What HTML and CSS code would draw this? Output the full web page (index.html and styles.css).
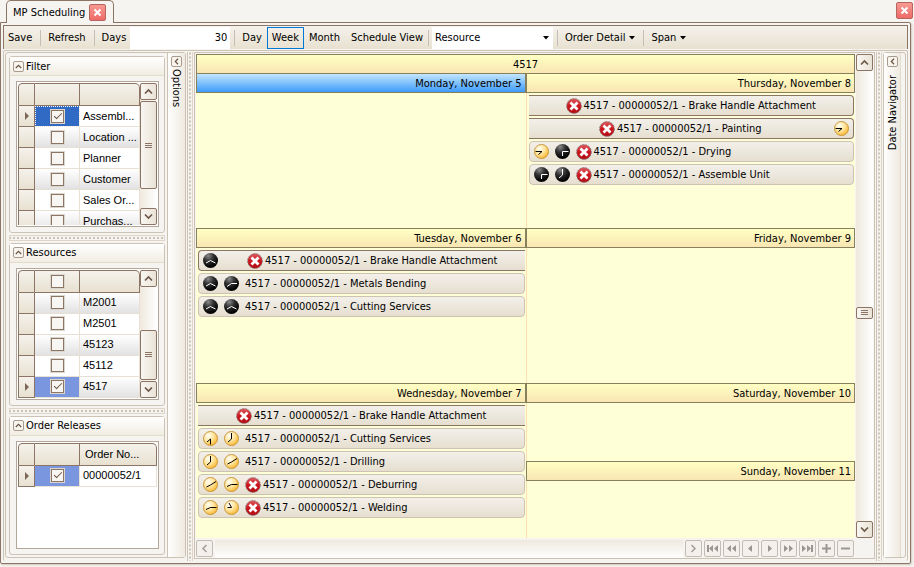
FILE: index.html
```html
<!DOCTYPE html>
<html lang="en">
<head>
    <meta charset="UTF-8">
    <meta name="viewport" content="width=device-width, initial-scale=1.0">
    <title>MP Scheduling</title>
    <link rel="stylesheet" href="styles.css">
</head>
<body>
    <!-- shared icons -->
    <svg class="defs" width="0" height="0" aria-hidden="true">
        <defs>
            <radialGradient id="day-fill" cx="0.35" cy="0.3" r="0.75">
                <stop offset="0" stop-color="#fffdf5"/>
                <stop offset="0.5" stop-color="#ffe6a0"/>
                <stop offset="1" stop-color="#fbb52c"/>
            </radialGradient>
            <radialGradient id="night-fill" cx="0.35" cy="0.2" r="0.7">
                <stop offset="0" stop-color="#8a8a8a"/>
                <stop offset="0.5" stop-color="#303030"/>
                <stop offset="1" stop-color="#050505"/>
            </radialGradient>
            <linearGradient id="error-fill" x1="0" y1="0" x2="0" y2="1">
                <stop offset="0" stop-color="#dc5a60"/>
                <stop offset="0.5" stop-color="#cc161e"/>
                <stop offset="1" stop-color="#b00e14"/>
            </linearGradient>
            <symbol id="day" viewBox="0 0 15 15"><circle cx="7.5" cy="7.5" r="7" fill="url(#day-fill)" stroke="#c9963c"/></symbol>
            <symbol id="night" viewBox="0 0 15 15"><circle cx="7.5" cy="7.5" r="7.5" fill="url(#night-fill)"/></symbol>
            <symbol id="error" viewBox="0 0 16 16">
                <circle cx="8" cy="8" r="7.4" fill="url(#error-fill)" stroke="#8d8484" stroke-dasharray="2 1"/>
                <path d="M4.500 4.500L11.500 11.500M11.500 4.500L4.500 11.500" stroke="#fff" stroke-width="2.8"/>
            </symbol>
            <symbol id="up" viewBox="0 0 9 9"><path d="M1 6.5L4.5 3L8 6.5" fill="none" stroke="currentColor" stroke-width="1.6"/></symbol>
            <symbol id="down" viewBox="0 0 9 9"><path d="M1 2.5L4.5 6L8 2.5" fill="none" stroke="currentColor" stroke-width="1.6"/></symbol>
            <symbol id="left" viewBox="0 0 9 9"><path d="M6.5 1L3 4.5L6.5 8" fill="none" stroke="currentColor" stroke-width="1.6"/></symbol>
            <symbol id="right" viewBox="0 0 9 9"><path d="M2.5 1L6 4.5L2.5 8" fill="none" stroke="currentColor" stroke-width="1.6"/></symbol>
            <symbol id="close" viewBox="0 0 9 9"><path d="M1.5 1.5L7.5 7.5M7.5 1.5L1.5 7.5" stroke="#fff" stroke-width="2"/></symbol>
            <symbol id="caret" viewBox="0 0 6 4"><path d="M0 0H6L3 3.5Z" fill="#000"/></symbol>
        </defs>
    </svg>

    <header class="tabs">
        <div class="tab">
            <span>MP Scheduling</span>
            <button class="close" aria-label="Close tab"><svg width="9" height="9"><use href="#close"/></svg></button>
        </div>
        <button class="close close-window" aria-label="Close window"><svg width="9" height="9"><use href="#close"/></svg></button>
    </header>

    <main class="frame">
        <div class="toolbar">
            <button class="tool">Save</button>
            <span class="sep"></span>
            <button class="tool">Refresh</button>
            <span class="sep"></span>
            <label class="tool-label" for="days">Days</label>
            <input class="days" id="days" type="text" value="30">
            <span class="sep"></span>
            <button class="tool">Day</button>
            <button class="tool active">Week</button>
            <button class="tool">Month</button>
            <button class="tool wide">Schedule View</button>
            <span class="sep"></span>
            <span class="combo">
                <select aria-label="Group by"><option>Resource</option></select>
                <svg width="6" height="4"><use href="#caret"/></svg>
            </span>
            <span class="sep"></span>
            <button class="tool">Order Detail <svg width="6" height="4"><use href="#caret"/></svg></button>
            <span class="sep"></span>
            <button class="tool">Span <svg width="6" height="4"><use href="#caret"/></svg></button>
        </div>

        <div class="content">
            <aside class="dock">
                <div class="groups">
                    <section class="group group-filter">
                        <h2><button class="toggle" aria-label="Collapse filter"><svg width="7" height="7"><use href="#up"/></svg></button>Filter</h2>
                        <div class="list">
                            <div class="rows">
                                <table>
                                    <thead><tr><th class="mark"></th><th class="pick"></th><th></th></tr></thead>
                                    <tbody>
                                        <tr class="focused"><th class="mark"><i class="pointer"></i></th><td class="pick"><input type="checkbox" aria-label="Assembly" checked></td><td>Assembl...</td></tr>
                                        <tr><th class="mark"></th><td class="pick"><input type="checkbox" aria-label="Location"></td><td>Location ...</td></tr>
                                        <tr><th class="mark"></th><td class="pick"><input type="checkbox" aria-label="Planner"></td><td>Planner</td></tr>
                                        <tr><th class="mark"></th><td class="pick"><input type="checkbox" aria-label="Customer"></td><td>Customer</td></tr>
                                        <tr><th class="mark"></th><td class="pick"><input type="checkbox" aria-label="Sales Order"></td><td>Sales Or...</td></tr>
                                        <tr><th class="mark"></th><td class="pick"><input type="checkbox" aria-label="Purchase"></td><td>Purchas...</td></tr>
                                    </tbody>
                                </table>
                            </div>
                            <div class="scroll">
                                <button class="sbtn" aria-label="Scroll up"><svg width="9" height="9"><use href="#up"/></svg></button>
                                <div class="thumb thumb-filter"><i class="grip"></i></div>
                                <div class="space"></div>
                                <button class="sbtn" aria-label="Scroll down"><svg width="9" height="9"><use href="#down"/></svg></button>
                            </div>
                        </div>
                    </section>
                    <div class="split-h"></div>
                    <section class="group group-resources">
                        <h2><button class="toggle" aria-label="Collapse resources"><svg width="7" height="7"><use href="#up"/></svg></button>Resources</h2>
                        <div class="list">
                            <div class="rows">
                                <table class="odd">
                                    <thead><tr><th class="mark"></th><th class="pick"><input type="checkbox" aria-label="All resources"></th><th></th></tr></thead>
                                    <tbody>
                                        <tr><th class="mark"></th><td class="pick"><input type="checkbox" aria-label="M2001"></td><td>M2001</td></tr>
                                        <tr><th class="mark"></th><td class="pick"><input type="checkbox" aria-label="M2501"></td><td>M2501</td></tr>
                                        <tr><th class="mark"></th><td class="pick"><input type="checkbox" aria-label="45123"></td><td>45123</td></tr>
                                        <tr><th class="mark"></th><td class="pick"><input type="checkbox" aria-label="45112"></td><td>45112</td></tr>
                                        <tr class="current"><th class="mark"><i class="pointer"></i></th><td class="pick"><input type="checkbox" aria-label="4517" checked></td><td>4517</td></tr>
                                    </tbody>
                                </table>
                            </div>
                            <div class="scroll">
                                <button class="sbtn" aria-label="Scroll up"><svg width="9" height="9"><use href="#up"/></svg></button>
                                <div class="space"></div>
                                <div class="thumb thumb-resources"><i class="grip"></i></div>
                                <button class="sbtn" aria-label="Scroll down"><svg width="9" height="9"><use href="#down"/></svg></button>
                            </div>
                        </div>
                    </section>
                    <div class="split-h"></div>
                    <section class="group group-orders">
                        <h2><button class="toggle" aria-label="Collapse order releases"><svg width="7" height="7"><use href="#up"/></svg></button>Order Releases</h2>
                        <div class="list">
                            <div class="rows">
                                <table>
                                    <thead><tr><th class="mark"></th><th class="pick"></th><th>Order No...</th></tr></thead>
                                    <tbody>
                                        <tr class="current"><th class="mark"><i class="pointer"></i></th><td class="pick"><input type="checkbox" aria-label="00000052/1" checked></td><td>00000052/1</td></tr>
                                    </tbody>
                                </table>
                            </div>
                        </div>
                    </section>
                </div>
                <div class="side">
                    <button class="toggle" aria-label="Collapse options"><svg width="7" height="7"><use href="#left"/></svg></button>
                    <span class="side-text">Options</span>
                </div>
            </aside>

            <div class="split-v"></div>

            <section class="scheduler">
                <div class="board">
                    <div class="calendar">
                        <div class="resource">4517</div>
                        <div class="week">
                            <div class="days-col">
                                <div class="cell">
                                    <div class="date today">Monday, November 5</div>
                                </div>
                                <div class="cell">
                                    <div class="date">Tuesday, November 6</div>
                                    <div class="event span-start"><svg class="clock light"><use href="#night"/><path d="M3 10L7.5 7.5L12.5 10"/></svg><div class="mid"><svg class="err"><use href="#error"/></svg>4517 - 00000052/1 - Brake Handle Attachment</div></div>
                                    <div class="event"><svg class="clock light"><use href="#night"/><path d="M3 10L7.5 7.5L12.5 10"/></svg><svg class="clock light"><use href="#night"/><path d="M3 10.5L7.5 7.5H13"/></svg><span>4517 - 00000052/1 - Metals Bending</span></div>
                                    <div class="event"><svg class="clock light"><use href="#night"/><path d="M3 10L7.5 7.5L12.5 10"/></svg><svg class="clock light"><use href="#night"/><path d="M3 10L7.5 7.5L12.5 10"/></svg><span>4517 - 00000052/1 - Cutting Services</span></div>
                                </div>
                                <div class="cell">
                                    <div class="date">Wednesday, November 7</div>
                                    <div class="event span-mid"><div class="mid"><svg class="err"><use href="#error"/></svg>4517 - 00000052/1 - Brake Handle Attachment</div></div>
                                    <div class="event"><svg class="clock"><use href="#day"/><path d="M4 11L7.5 8V13.5"/></svg><svg class="clock"><use href="#day"/><path d="M7.5 2V8L4 11"/></svg><span>4517 - 00000052/1 - Cutting Services</span></div>
                                    <div class="event"><svg class="clock"><use href="#day"/><path d="M7.5 2V8L4 11"/></svg><svg class="clock"><use href="#day"/><path d="M3.5 10L7.5 8L13 4.5"/></svg><span>4517 - 00000052/1 - Drilling</span></div>
                                    <div class="event"><svg class="clock"><use href="#day"/><path d="M3.5 10L7.5 8L13 4.5"/></svg><svg class="clock"><use href="#day"/><path d="M3 9.5L7.5 7.5H13.5"/></svg><svg class="err"><use href="#error"/></svg><span>4517 - 00000052/1 - Deburring</span></div>
                                    <div class="event"><svg class="clock"><use href="#day"/><path d="M3 9.5L7.5 7.5H13.5"/></svg><svg class="clock"><use href="#day"/><path d="M5 3L7.5 7.5H3.5"/></svg><svg class="err"><use href="#error"/></svg><span>4517 - 00000052/1 - Welding</span></div>
                                </div>
                            </div>
                            <div class="days-col">
                                <div class="cell">
                                    <div class="date">Thursday, November 8</div>
                                    <div class="event span-end"><div class="mid"><svg class="err"><use href="#error"/></svg>4517 - 00000052/1 - Brake Handle Attachment</div></div>
                                    <div class="event span-end"><div class="mid"><svg class="err"><use href="#error"/></svg>4517 - 00000052/1 - Painting</div><svg class="clock"><use href="#day"/><path d="M1.5 7.5H8L4.5 10.5"/></svg></div>
                                    <div class="event"><svg class="clock"><use href="#day"/><path d="M1.5 7.5H8L4.5 10.5"/></svg><svg class="clock light"><use href="#night"/><path d="M13.5 7.5H7.5V12"/></svg><svg class="err"><use href="#error"/></svg><span>4517 - 00000052/1 - Drying</span></div>
                                    <div class="event"><svg class="clock light"><use href="#night"/><path d="M13.5 7.5H7.5V12"/></svg><svg class="clock light"><use href="#night"/><path d="M7.5 2V8L4 11"/></svg><svg class="err"><use href="#error"/></svg><span>4517 - 00000052/1 - Assemble Unit</span></div>
                                </div>
                                <div class="cell">
                                    <div class="date">Friday, November 9</div>
                                </div>
                                <div class="cell weekend">
                                    <div class="half">
                                        <div class="date">Saturday, November 10</div>
                                    </div>
                                    <div class="half">
                                        <div class="date">Sunday, November 11</div>
                                    </div>
                                </div>
                            </div>
                        </div>
                    </div>
                    <div class="scroll scroll-main">
                        <button class="sbtn" aria-label="Previous weeks"><svg width="9" height="9"><use href="#up"/></svg></button>
                        <div class="space space-before"></div>
                        <div class="thumb thumb-main"><i class="grip"></i></div>
                        <div class="space space-after"></div>
                        <button class="sbtn" aria-label="Next weeks"><svg width="9" height="9"><use href="#down"/></svg></button>
                    </div>
                </div>
                <div class="navigator">
                    <button class="nbtn" aria-label="Scroll left"><svg width="9" height="9"><use href="#left"/></svg></button>
                    <div class="track"></div>
                    <button class="nbtn" aria-label="Scroll right"><svg width="9" height="9"><use href="#right"/></svg></button>
                    <button class="nbtn" aria-label="First"><svg width="11" height="9"><path d="M0 1H2V8H0ZM6 1V8L2 4.500ZM11 1V8L7 4.500Z"/></svg></button>
                    <button class="nbtn" aria-label="Previous page"><svg width="11" height="9"><path d="M5 1V8L1 4.500ZM10 1V8L6 4.500Z"/></svg></button>
                    <button class="nbtn" aria-label="Previous"><svg width="11" height="9"><path d="M7 1V8L3 4.500Z"/></svg></button>
                    <button class="nbtn" aria-label="Next"><svg width="11" height="9"><path d="M4 1V8L8 4.500Z"/></svg></button>
                    <button class="nbtn" aria-label="Next page"><svg width="11" height="9"><path d="M1 1V8L5 4.500ZM6 1V8L10 4.500Z"/></svg></button>
                    <button class="nbtn" aria-label="Last"><svg width="11" height="9"><path d="M0 1V8L4 4.500ZM5 1V8L9 4.500ZM9 1H11V8H9Z"/></svg></button>
                    <button class="nbtn" aria-label="Add resource"><svg width="11" height="9"><path d="M1 3.500H10V5.500H1ZM4.500 0H6.500V9H4.500Z"/></svg></button>
                    <button class="nbtn" aria-label="Remove resource"><svg width="11" height="9"><path d="M1 3.500H10V5.500H1Z"/></svg></button>
                </div>
            </section>

            <div class="split-v"></div>

            <aside class="date-nav">
                <div class="side">
                    <button class="toggle" aria-label="Expand date navigator"><svg width="7" height="7"><use href="#left"/></svg></button>
                    <span class="side-text flipped">Date Navigator</span>
                </div>
            </aside>
        </div>
    </main>
</body>
</html>
```
FILE: styles.css
```css
:root {
    --brown: #8c7565;
    --tan: #cdc3b5;
    --panel: #f6f4f0;
    --face: linear-gradient(#f5f2ec, #e8e1d1);
    --header: linear-gradient(#ffffc4, #f9e6b2);
    --olive: #87805c;
}

* {
    box-sizing: border-box;
}

body {
    margin: 0;
    height: 100vh;
    display: flex;
    flex-direction: column;
    background-color: var(--panel);
    color: #000;
    font-family: "DejaVu Sans Condensed", Tahoma, sans-serif;
    font-size: 11px;
    line-height: 15px;
    overflow: hidden;
}

button, input, select {
    font: inherit;
    color: inherit;
    margin: 0;
    padding: 0;
    border: none;
    background: none;
    border-radius: 0;
}

button {
    display: flex;
    align-items: center;
    justify-content: center;
    flex: none;
}

svg {
    display: block;
    flex: none;
}

.defs {
    position: absolute;
}

/* Tabs */
.tabs {
    display: flex;
    justify-content: space-between;
    height: 23px;
    padding: 0 1px 0 6px;
    margin-bottom: -1px;
}

.tab {
    display: flex;
    align-items: center;
    gap: 4px;
    padding: 0 7px 0 6px;
    border: 1px solid var(--brown);
    border-bottom: none;
    border-radius: 5px 5px 0 0;
    background-color: var(--panel);
    z-index: 1;
}

.close {
    width: 17px;
    height: 17px;
    border: 1px solid #b5655d;
    border-radius: 2px;
    background: linear-gradient(#f79a92, #ee6a68);
}

.close-window {
    margin-top: 2px;
}

/* Main frame */
.frame {
    flex: 1;
    min-height: 0;
    display: flex;
    flex-direction: column;
    margin: 0 3px 3px 0;
    padding: 2px;
    border: 1px solid var(--brown);
    border-radius: 0 2px 2px 2px;
    box-shadow: 1px 1px 2px #cfc8be;
}

.toolbar {
    display: flex;
    align-items: center;
    height: 24px;
    flex: none;
    border: 1px solid var(--brown);
    border-bottom: none;
    background: var(--face);
}

.tool, .tool-label {
    height: 22px;
    padding: 0 4px;
    line-height: 22px;
}

.tool svg {
    margin-left: 4px;
}

.active {
    border: 1px solid #0078d7;
    margin: 0 1px;
}

.wide {
    padding: 0 1px 0 7px;
}

.sep {
    width: 1px;
    height: 16px;
    margin: 0 3px 0 4px;
    background-color: #c3bfb8;
    flex: none;
}

.days {
    width: 100px;
    height: 22px;
    padding: 0 3px;
    background-color: #fff;
    text-align: right;
}

.combo {
    display: flex;
    align-items: center;
    width: 121px;
    height: 22px;
    padding-right: 4px;
    background-color: #fff;
}

.combo select {
    flex: 1;
    height: 22px;
    padding-left: 3px;
    appearance: none;
}

.content {
    flex: 1;
    min-height: 0;
    display: flex;
    border-top: 1px solid var(--tan);
    border-left: 1px solid var(--tan);
    border-right: 1px solid var(--tan);
    margin-top: 1px;
    padding: 1px 1px 0 1px;
    border-radius: 2px;
}

/* Left dock */
.dock {
    display: flex;
    width: 181px;
    flex: none;
    border: 1px solid var(--tan);
    border-radius: 3px;
    margin-bottom: 3px;
}

.groups {
    flex: 1;
    min-width: 0;
    display: flex;
    flex-direction: column;
    padding: 3px 2px 2px 3px;
    border-right: 1px solid var(--tan);
}

.group {
    display: flex;
    flex-direction: column;
    min-height: 0;
    border: 1px solid var(--tan);
    border-radius: 3px;
}

.group-filter { flex: 177 1 0; }
.group-resources { flex: 163 1 0; }
.group-orders { flex: 139 1 0; }

.group h2 {
    display: flex;
    align-items: center;
    gap: 2px;
    height: 19px;
    flex: none;
    margin: 0;
    padding-left: 3px;
    border-bottom: 1px solid #e4dccb;
    background: linear-gradient(#fff, #f1ede3);
    font-size: 11px;
    font-weight: normal;
}

.toggle {
    width: 11px;
    height: 11px;
    border: 1px solid #a89a8c;
    border-radius: 2px;
    background-color: #f8f5ef;
    color: #6b5647;
}

.list {
    flex: 1;
    min-height: 0;
    display: flex;
    margin: 5px 5px 5px 6px;
    padding: 1px;
    border: 1px solid #b3a79c;
    background-color: #fff;
}

.rows {
    flex: 1;
    min-width: 0;
    overflow: hidden;
}

table {
    width: 100%;
    table-layout: fixed;
    border-collapse: separate;
    border-spacing: 0;
    font-family: "Liberation Sans", Arial, sans-serif;
}

th, td {
    height: 21px;
    padding: 0 0 0 3px;
    text-align: left;
    font-weight: normal;
    white-space: nowrap;
    overflow: hidden;
}

td {
    border-right: 1px solid #e7e1d3;
    border-bottom: 1px solid #e7e1d3;
}

thead th {
    height: 23px;
    padding-left: 5px;
    border-top: 1px solid var(--brown);
    border-right: 1px solid var(--brown);
    border-bottom: 1px solid var(--brown);
    background: var(--face);
}

thead th:first-child {
    border-left: 1px solid var(--brown);
    border-radius: 4px 0 0 0;
}

thead th:last-child {
    border-radius: 0 5px 0 0;
}

th.mark {
    width: 17px;
    padding: 0;
    border-left: 1px solid var(--brown);
    border-right: 1px solid var(--brown);
    border-bottom: 1px solid var(--brown);
    background: var(--face);
}

th.pick, td.pick {
    width: 45px;
    padding: 0;
    text-align: center;
}

tbody tr:nth-child(even) td,
.odd tbody tr:nth-child(odd) td {
    background: linear-gradient(#fff, #e2e2e2);
}

.odd tbody tr:nth-child(even) td {
    background: #fff;
}

tbody tr.focused td.pick {
    background: #316ac5;
    outline: 1px dotted #fff;
    outline-offset: -1px;
}

tbody tr.current td.pick {
    background: #7a96df;
}

.pointer {
    display: block;
    width: 0;
    height: 0;
    margin-left: 6px;
    border-left: 4px solid #7d6758;
    border-top: 4px solid transparent;
    border-bottom: 4px solid transparent;
}

input[type="checkbox"] {
    appearance: none;
    display: block;
    width: 13px;
    height: 13px;
    margin: 0 auto;
    border: 1px solid var(--brown);
    outline: 1px solid #dcd7ce;
    background-color: #f8f6f2;
}

input[type="checkbox"]:checked::before {
    content: "";
    display: block;
    width: 7px;
    height: 3px;
    margin: 2px 0 0 2px;
    border-left: 1px solid #6b5647;
    border-bottom: 1px solid #6b5647;
    transform: rotate(-45deg);
}

/* Scroll bars */
.scroll {
    display: flex;
    flex-direction: column;
    width: 17px;
    flex: none;
    background: linear-gradient(90deg, #efe9de, #fff);
}

.sbtn, .thumb {
    width: 17px;
    height: 17px;
    border: 1px solid var(--brown);
    border-radius: 2px;
    background: linear-gradient(90deg, #f8f6f2, #eae3d6);
    color: #6b5647;
    flex: none;
}

.thumb {
    display: flex;
    align-items: center;
    justify-content: center;
    margin: 1px 0;
}

.thumb-filter { height: 88px; }
.thumb-resources { height: 50px; }
.thumb-main { height: 12px; }

.grip {
    width: 7px;
    height: 5px;
    background: repeating-linear-gradient(#8c7565 0 1px, transparent 1px 2px);
}

.space {
    flex: 1;
}

.space-before { flex: 7; }
.space-after { flex: 6; }

/* Splitters */
.split-h {
    height: 6px;
    flex: none;
    margin: 2px 0;
    border: 1px solid #ded5c8;
    background: linear-gradient(90deg, var(--tan) 50%, transparent 50%) center / 4px 2px repeat-x;
}

.split-v {
    width: 6px;
    flex: none;
    margin: 0 1px;
    border-left: 1px solid var(--tan);
    border-right: 1px solid #ded5c8;
    background: linear-gradient(var(--tan) 50%, transparent 50%) center / 2px 4px repeat-y;
}

/* Vertical captions */
.side {
    display: flex;
    flex-direction: column;
    align-items: center;
    gap: 2px;
    width: 17px;
    flex: none;
    padding-top: 3px;
    background: linear-gradient(90deg, #fefefd, #efeae1);
}

.side-text {
    writing-mode: vertical-rl;
}

.flipped {
    transform: rotate(180deg);
    margin-top: 6px;
}

.date-nav {
    flex: none;
    width: 23px;
    border: 1px solid var(--tan);
    border-radius: 3px;
    margin-bottom: 3px;
    display: flex;
}

.date-nav .side {
    border-right: 1px solid #e4dccb;
}

/* Scheduler */
.scheduler {
    flex: 1;
    min-width: 0;
    display: flex;
    flex-direction: column;
    margin-bottom: 2px;
    padding: 1px 1px 0 1px;
    border: 1px solid var(--tan);
}

.board {
    flex: 1;
    min-height: 0;
    display: flex;
}

.calendar {
    flex: 1;
    min-width: 0;
    display: flex;
    flex-direction: column;
}

.resource {
    height: 19px;
    flex: none;
    border: 1px solid var(--olive);
    border-bottom: none;
    background: var(--header);
    text-align: center;
    line-height: 19px;
}

.week {
    flex: 1;
    min-height: 0;
    display: grid;
    grid-template-columns: 1fr 1fr;
}

.days-col {
    display: grid;
    grid-template-rows: repeat(3, 1fr);
    min-width: 0;
    background-color: #ffffd7;
}

.days-col + .days-col {
    border-left: 1px solid #fbdfae;
}

.cell {
    min-height: 0;
}

.weekend {
    display: grid;
    grid-template-rows: 1fr 1fr;
}

.date {
    height: 20px;
    margin-bottom: 2px;
    padding-right: 3px;
    border: 1px solid var(--olive);
    background: var(--header);
    text-align: right;
    line-height: 19px;
}

.days-col + .days-col .date {
    margin-left: -1px;
}

.today {
    background: linear-gradient(#c3e6ff, #3e9bfa);
}

.event {
    display: flex;
    align-items: center;
    gap: 6px;
    height: 21px;
    margin: 0 1px 2px 2px;
    padding: 0 4px;
    border: 1px solid var(--tan);
    border-radius: 4px;
    background: linear-gradient(#f3f0ea, #e6dfd0);
    white-space: nowrap;
}

.mid {
    flex: 1;
    display: flex;
    align-items: center;
    justify-content: center;
    gap: 2px;
}

.clock {
    width: 15px;
    height: 15px;
}

.clock path {
    fill: none;
    stroke: #000;
}

.light path {
    stroke: #fff;
}

.err {
    width: 16px;
    height: 16px;
}

.event > .err {
    margin-right: -4px;
}

.span-start, .span-mid, .span-end {
    border-color: var(--brown);
}

.span-start {
    border-right: none;
    border-radius: 4px 0 0 4px;
}

.span-mid {
    border-left: none;
    border-right: none;
    border-radius: 0;
}

.span-end {
    border-left: none;
    border-radius: 0 4px 4px 0;
}

.scroll-main {
    margin-left: 1px;
}

/* Resource navigator */
.navigator {
    display: flex;
    gap: 2px;
    height: 20px;
    flex: none;
    padding: 2px 19px 0 0;
}

.track {
    flex: 1;
    background: linear-gradient(#efe9df, #fff);
}

.nbtn {
    width: 17px;
    height: 17px;
    border: 1px solid #c4bcb3;
    border-radius: 2px;
    background-color: #f4f1ec;
    color: #a8a098;
}

.nbtn path {
    fill: #9c9690;
}
```
